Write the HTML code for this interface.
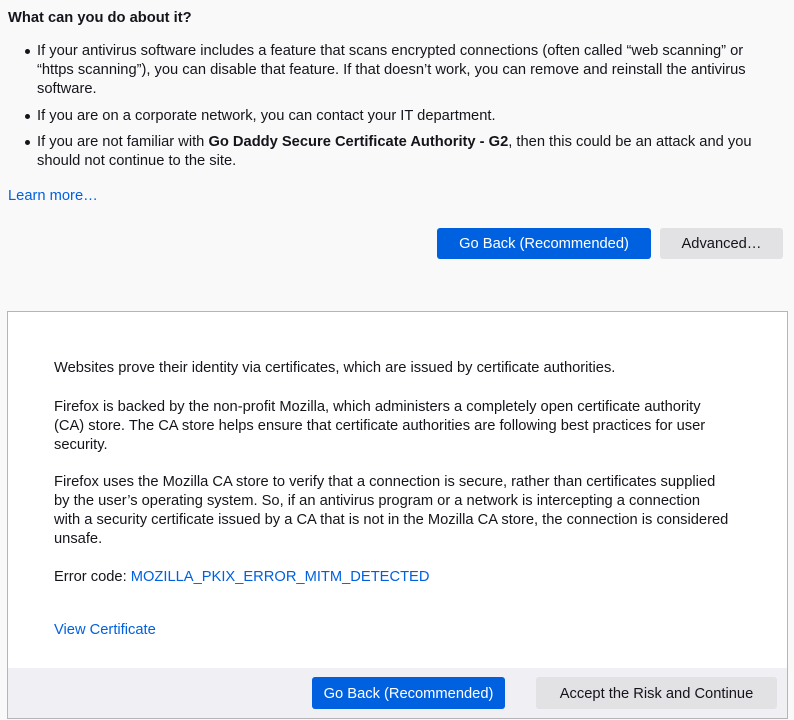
<!DOCTYPE html>
<html><head><meta charset="utf-8"><style>
html,body{margin:0;padding:0}
body{width:794px;height:720px;background:#f9f9fa;font-family:"Liberation Sans",sans-serif;font-size:14.7px;color:#15141a;position:relative;overflow:hidden}
.a{position:absolute;white-space:nowrap;line-height:19px}
.dot{position:absolute;width:5px;height:5px;border-radius:50%;background:#15141a}
.lnk{color:#0061e0}
.btn{position:absolute;border-radius:3px;text-align:center;font-size:14.7px;white-space:nowrap}
.blue{background:#0061e0;color:#fff}
.gray{background:#e2e2e5;color:#15141a}
.panel{position:absolute;left:7px;top:311px;width:779px;height:406px;background:#fff;border:1px solid #b5b5b8}
.foot{position:absolute;left:0;bottom:0;width:779px;height:50px;background:#f0f0f4}
</style></head><body>
<div class="a" style="left:8px;top:9px;font-weight:bold">What can you do about it?</div>
<div class="dot" style="left:25px;top:49px"></div>
<div class="a" style="left:37px;top:42px">If your antivirus software includes a feature that scans encrypted connections (often called “web scanning” or<br>“https scanning”), you can disable that feature. If that doesn’t work, you can remove and reinstall the antivirus<br>software.</div>
<div class="dot" style="left:25px;top:114px"></div>
<div class="a" style="left:37px;top:107px">If you are on a corporate network, you can contact your IT department.</div>
<div class="dot" style="left:25px;top:140px"></div>
<div class="a" style="left:37px;top:133px">If you are not familiar with <b>Go Daddy Secure Certificate Authority - G2</b>, then this could be an attack and you<br>should not continue to the site.</div>
<div class="a lnk" style="left:8px;top:187px">Learn more…</div>
<div class="btn blue" style="left:437px;top:228px;width:214px;height:31px;line-height:33px">Go Back (Recommended)</div>
<div class="btn gray" style="left:660px;top:228px;width:123px;height:31px;line-height:33px">Advanced…</div>
<div class="panel">
<div class="a" style="left:46px;top:47px">Websites prove their identity via certificates, which are issued by certificate authorities.</div>
<div class="a" style="left:46px;top:86px">Firefox is backed by the non-profit Mozilla, which administers a completely open certificate authority<br>(CA) store. The CA store helps ensure that certificate authorities are following best practices for user<br>security.</div>
<div class="a" style="left:46px;top:161px">Firefox uses the Mozilla CA store to verify that a connection is secure, rather than certificates supplied<br>by the user’s operating system. So, if an antivirus program or a network is intercepting a connection<br>with a security certificate issued by a CA that is not in the Mozilla CA store, the connection is considered<br>unsafe.</div>
<div class="a" style="left:46px;top:256px">Error code: <span class="lnk">MOZILLA_PKIX_ERROR_MITM_DETECTED</span></div>
<div class="a lnk" style="left:46px;top:309px">View Certificate</div>
<div class="foot">
<div class="btn blue" style="left:304px;top:9px;width:193px;height:32px;line-height:34px">Go Back (Recommended)</div>
<div class="btn gray" style="left:528px;top:9px;width:241px;height:32px;line-height:34px">Accept the Risk and Continue</div>
</div>
</div>
</body></html>
